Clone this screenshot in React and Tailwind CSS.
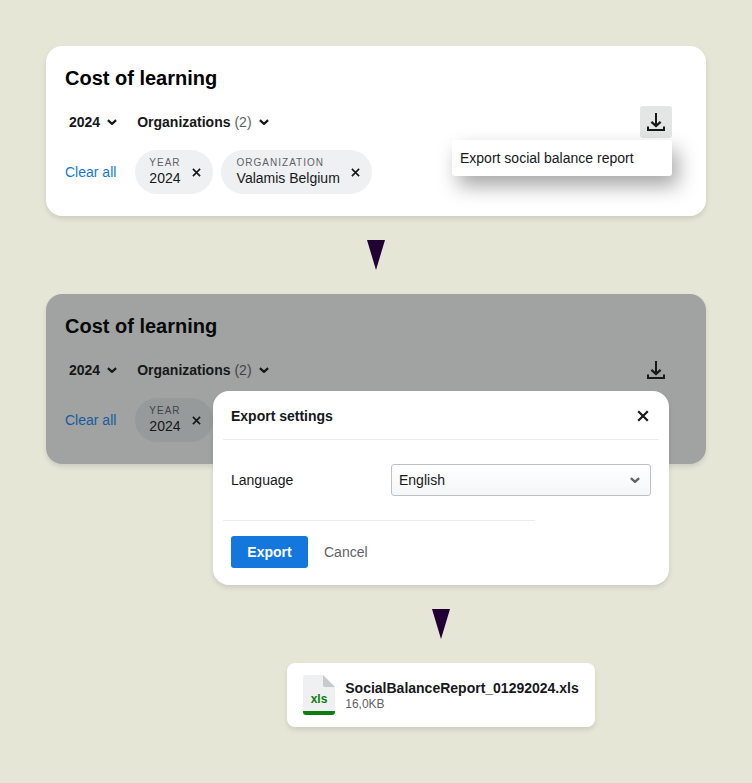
import React from "react";

//#region Fake data
const chips = [
  { id: "year", label: "Year", value: "2024", padding: "pl-3.5" },
  {
    id: "organization",
    label: "Organization",
    value: "Valamis Belgium",
    padding: "pl-4",
  },
];

const languages = ["English", "Suomi", "Français"];
//#endregion

const ChevronIcon = ({ className }) => (
  <svg
    viewBox="0 0 10 10"
    className={`h-2.5 w-2.5 shrink-0 ${className ?? ""}`}
    fill="none"
    stroke="currentColor"
    strokeWidth="2.2"
    strokeLinejoin="round"
    aria-hidden="true"
  >
    <path d="M0.9 3.1 5 6.9l4.1-3.8" />
  </svg>
);

const CloseIcon = ({ className }) => (
  <svg
    viewBox="0 0 10 10"
    className={className}
    fill="none"
    stroke="currentColor"
    strokeWidth="1.8"
    aria-hidden="true"
  >
    <path d="M1 1l8 8M9 1L1 9" />
  </svg>
);

const DownloadIcon = () => (
  <svg
    viewBox="0 0 18 18"
    className="h-[18px] w-[18px]"
    fill="none"
    stroke="currentColor"
    strokeWidth="2"
    aria-hidden="true"
  >
    <path d="M9 0v13" />
    <path d="M4.4 8.8 9 13l4.6-4.2" strokeWidth="2.3" />
    <path d="M1 13.5V17h16v-3.5" />
  </svg>
);

const FileIcon = () => (
  <svg
    viewBox="0 0 32 40"
    className="h-10 w-8 shrink-0"
    role="img"
    aria-label="xls file"
  >
    <path d="M2 0h18l12 12v25H0V2a2 2 0 0 1 2-2z" fill="#eff0f2" />
    <path d="M20 0l12 12H22a2 2 0 0 1-2-2z" fill="#c8c9cc" />
    <path d="M0 36h32v1a3 3 0 0 1-3 3H3a3 3 0 0 1-3-3z" fill="#107c10" />
    <text
      x="16"
      y="28"
      textAnchor="middle"
      fill="#107c10"
      className="text-xs font-bold"
    >
      xls
    </text>
  </svg>
);

const Arrow = () => (
  <svg
    viewBox="0 0 18 30"
    className="mx-auto my-6 h-[30px] w-[18px]"
    aria-hidden="true"
  >
    <path d="M0 0h18L9 30z" fill="#210035" />
  </svg>
);

const FilterButton = ({ label, count }) => (
  <button
    type="button"
    aria-haspopup="listbox"
    className="flex items-center gap-[7px] text-sm font-bold"
  >
    <span>
      {label}
      {count && <span className="font-normal text-[#5f6166]"> ({count})</span>}
    </span>
    <ChevronIcon />
  </button>
);

const Chip = ({ label, value, padding }) => (
  <div
    className={`flex h-11 items-center gap-[11px] rounded-full bg-[#eff0f2] pr-3 ${padding}`}
  >
    <div>
      <p className="text-[10px] leading-3 tracking-[1px] text-[#5f6166] uppercase">
        {label}
      </p>
      <p className="text-sm leading-[18px]">{value}</p>
    </div>
    <button type="button" aria-label={`Remove ${label}`}>
      <CloseIcon className="h-[9px] w-[9px]" />
    </button>
  </div>
);

const ReportPanel = ({ chips, menuOpen, dimmed }) => (
  <section className="relative rounded-2xl bg-white px-[19px] pt-[18px] pb-[22px] shadow-[0_3px_5px_rgba(0,0,0,0.1)]">
    <h2 className="text-xl font-bold text-black">Cost of learning</h2>
    <div className="mt-3.5 mr-[15px] flex h-8 items-center justify-between">
      <div className="ml-1 flex gap-5">
        <FilterButton label="2024" />
        <FilterButton label="Organizations" count={2} />
      </div>
      <div className="relative">
        <button
          type="button"
          aria-label="Export"
          aria-haspopup="menu"
          className={`flex h-8 w-8 items-center justify-center rounded-[3px] ${
            menuOpen ? "bg-[#e4e6e6]" : ""
          }`}
        >
          <DownloadIcon />
        </button>
        {menuOpen && (
          <div
            role="menu"
            className="absolute top-full right-0 mt-0.5 w-[220px] rounded-[3px] bg-white shadow-[6px_10px_20px_rgba(0,0,0,0.35)]"
          >
            <button
              type="button"
              role="menuitem"
              className="h-9 w-full px-2 text-left text-sm"
            >
              Export social balance report
            </button>
          </div>
        )}
      </div>
    </div>
    <div className="mt-3 flex items-center gap-2">
      <button
        type="button"
        className={`mr-[11px] text-sm ${
          dimmed ? "text-[#2088f5]" : "text-[#1377dd]"
        }`}
      >
        Clear all
      </button>
      {chips.map((chip) => (
        <Chip key={chip.id} {...chip} />
      ))}
    </div>
    {dimmed && (
      <div className="absolute inset-0 rounded-2xl bg-[#141916]/40" />
    )}
  </section>
);

const ExportDialog = () => (
  <div
    role="dialog"
    aria-labelledby="export-title"
    className="w-full rounded-2xl bg-white px-2.5 pb-[17px] shadow-[0_3px_5px_rgba(0,0,0,0.1)]"
  >
    <div className="flex h-[49px] items-center justify-between border-b border-[#ececee] px-2 pt-0.5">
      <h3 id="export-title" className="text-sm font-bold">
        Export settings
      </h3>
      <button type="button" aria-label="Close" className="mr-0.5">
        <CloseIcon className="h-3 w-3" />
      </button>
    </div>
    <div className="flex items-center justify-between px-2 py-6">
      <label htmlFor="language" className="text-sm">
        Language
      </label>
      <div className="relative w-[260px]">
        <select
          id="language"
          defaultValue="English"
          className="h-8 w-full appearance-none rounded-[3px] border border-[#bfc0c5] bg-linear-to-b from-white to-[#f4f6f8] px-[7px] text-sm"
        >
          {languages.map((language) => (
            <option key={language}>{language}</option>
          ))}
        </select>
        <ChevronIcon className="pointer-events-none absolute top-[11px] right-[11px] text-[#5f6166]" />
      </div>
    </div>
    <div className="w-[312px] border-t border-[#ececee]" />
    <div className="mt-[15px] flex items-center gap-4 px-2">
      <button
        type="button"
        className="h-8 w-[77px] rounded-[3px] bg-[#1377dd] text-sm font-bold text-white"
      >
        Export
      </button>
      <button type="button" className="text-sm text-[#5f6166]">
        Cancel
      </button>
    </div>
  </div>
);

const FileCard = () => (
  <div className="flex items-center gap-2.5 rounded-lg bg-white px-4 py-3 shadow-[0_3px_5px_rgba(0,0,0,0.1)]">
    <FileIcon />
    <div>
      <p className="text-sm leading-[18px] font-bold">
        SocialBalanceReport_01292024.xls
      </p>
      <p className="text-xs leading-[14px] text-[#5f6166]">16,0KB</p>
    </div>
  </div>
);

const App = () => {
  return (
    <main className="min-h-screen bg-[#e5e6d6] p-[46px] font-['Liberation_Sans',Arial,sans-serif] text-[#16181a]">
      <ReportPanel chips={chips} menuOpen />
      <Arrow />
      <ReportPanel chips={chips.slice(0, 1)} dimmed />
      {/* The dialog overlaps the bottom of the dimmed panel */}
      <div className="relative -mt-[73px] mr-[37px] ml-auto flex max-w-[456px] flex-col items-center">
        <ExportDialog />
        <Arrow />
        <FileCard />
      </div>
    </main>
  );
};

export default App;
